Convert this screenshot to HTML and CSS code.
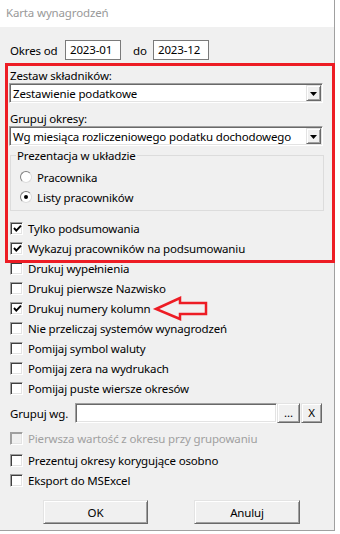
FILE: index.html
```html
<!DOCTYPE html>
<html>
  <head>
    <title>Karta wynagrodzeń</title>
    <link rel="stylesheet" href="styles.css">
  </head>

  <body>
    <div class="window">
      <div class="titlebar">Karta wynagrodzeń</div>

      <div class="dialog">
        <div class="period-row">
          <span class="period-label">Okres od</span>
          <div class="edit period">2023-01</div>
          <span class="period-to">do</span>
          <div class="edit period">2023-12</div>
        </div>

        <div class="field-label">Zestaw składników:</div>
        <div class="combo">
          <span class="combo-text">Zestawienie podatkowe</span>
          <span class="combo-button">
            <svg width="7" height="4" viewBox="0 0 7 4"><polygon points="0,0 7,0 3.5,4" fill="#000" /></svg>
          </span>
        </div>

        <div class="field-label">Grupuj okresy:</div>
        <div class="combo">
          <span class="combo-text">Wg miesiąca rozliczeniowego podatku dochodowego</span>
          <span class="combo-button">
            <svg width="7" height="4" viewBox="0 0 7 4"><polygon points="0,0 7,0 3.5,4" fill="#000" /></svg>
          </span>
        </div>

        <fieldset class="group">
          <legend>Prezentacja w układzie</legend>
          <div class="radio-row first"><span class="radio"></span>Pracownika</div>
          <div class="radio-row"><span class="radio checked"></span>Listy pracowników</div>
        </fieldset>

        <div class="options">
          <div class="check-row"><span class="check checked"><svg width="9" height="9" viewBox="0 0 9 9"><polyline points="1,4 3.3,6.6 8,1.6" /></svg></span>Tylko podsumowania</div>
          <div class="check-row"><span class="check checked"><svg width="9" height="9" viewBox="0 0 9 9"><polyline points="1,4 3.3,6.6 8,1.6" /></svg></span>Wykazuj pracowników na podsumowaniu</div>
          <div class="check-row"><span class="check"></span>Drukuj wypełnienia</div>
          <div class="check-row"><span class="check"></span>Drukuj pierwsze Nazwisko</div>
          <div class="check-row"><span class="check checked"><svg width="9" height="9" viewBox="0 0 9 9"><polyline points="1,4 3.3,6.6 8,1.6" /></svg></span>Drukuj numery kolumn</div>
          <div class="check-row"><span class="check"></span>Nie przeliczaj systemów wynagrodzeń</div>
          <div class="check-row"><span class="check"></span>Pomijaj symbol waluty</div>
          <div class="check-row"><span class="check"></span>Pomijaj zera na wydrukach</div>
          <div class="check-row"><span class="check"></span>Pomijaj puste wiersze okresów</div>
        </div>

        <div class="group-row">
          <span class="group-label">Grupuj wg.</span>
          <div class="edit group-edit"></div>
          <div class="small-button">...</div>
          <div class="small-button narrow">X</div>
        </div>

        <div class="options after-group">
          <div class="check-row disabled"><span class="check"></span>Pierwsza wartość z okresu przy grupowaniu</div>
          <div class="check-row tight"><span class="check"></span>Prezentuj okresy korygujące osobno</div>
          <div class="check-row"><span class="check"></span>Eksport do MSExcel</div>
        </div>

        <div class="buttons">
          <div class="button">OK</div>
          <div class="button wide">Anuluj</div>
        </div>
      </div>

      <!-- red annotation drawn over the dialog -->
      <div class="mark-box"></div>
      <svg class="mark-arrow" width="62" height="30" viewBox="0 0 62 30">
        <polygon points="6,16 30,5 30,10 56,10 56,21 30,21 30,26" />
      </svg>
    </div>
  </body>
</html>
```

FILE: styles.css
```css
body {
  margin: 0;
  background: #ffffff;
  font-family: "Noto Sans", sans-serif;
  font-size: 11.5px;
  letter-spacing: -0.15px;
  color: #000000;
}

.window {
  position: relative;
  width: 334px;
  height: 530px;
  background: #f0f0f0;
  border-right: 1px solid #a0a0a0;
  border-bottom: 1px solid #a0a0a0;
}

.titlebar {
  height: 27px;
  padding-left: 6px;
  background: #ffffff;
  color: #999999;
  line-height: 26px;
}

.dialog {
  padding: 13px 11px 0 10px;
}

.period-row {
  display: flex;
  align-items: center;
  height: 20px;
}

.period-label {
  width: 55px;
}

.period-to {
  width: 20px;
  margin-left: 12px;
}

.edit {
  box-sizing: border-box;
  height: 20px;
  background: #ffffff;
}

.period {
  width: 56px;
  padding-left: 4px;
  border: 1px solid #7a7a7a;
  line-height: 18px;
}

.field-label {
  height: 15px;
  margin-top: 8px;
  line-height: 15px;
}

.combo {
  box-sizing: border-box;
  display: flex;
  align-items: center;
  width: 314px;
  height: 20px;
  margin-left: -1px;
  padding: 1px;
  background: #ffffff;
  border: 1px solid;
  border-color: #a0a0a0 #ffffff #ffffff #a0a0a0;
  box-shadow: inset 1px 1px #696969, inset -1px -1px #e3e3e3;
}

.combo-text {
  flex: 1;
  padding-left: 2px;
  white-space: nowrap;
  overflow: hidden;
}

.combo-button,
.small-button,
.button {
  box-sizing: border-box;
  display: flex;
  align-items: center;
  justify-content: center;
  background: #f0f0f0;
  border: 1px solid;
  border-color: #e3e3e3 #696969 #696969 #e3e3e3;
  box-shadow: inset 1px 1px #ffffff, inset -1px -1px #a0a0a0;
}

.combo-button {
  width: 15px;
  height: 16px;
  padding-top: 1px;
}

.group {
  box-sizing: border-box;
  width: 314px;
  margin: 2px 0 0 0;
  padding: 0 0 3px 5px;
  border: 1px solid #dcdcdc;
}

.group legend {
  padding: 0 1px;
  line-height: 15px;
}

.radio-row,
.check-row {
  display: flex;
  align-items: center;
  height: 20px;
  white-space: nowrap;
}

.radio-row {
  padding-left: 4px;
}

.radio-row.first {
  margin-top: 4px;
}

.radio {
  box-sizing: border-box;
  display: flex;
  align-items: center;
  justify-content: center;
  width: 12px;
  height: 12px;
  margin-right: 5px;
  background: #ffffff;
  border: 1px solid;
  border-color: #808080 #dcdcdc #dcdcdc #808080;
  border-radius: 50%;
}

.radio.checked::after {
  content: "";
  width: 4px;
  height: 4px;
  background: #000000;
  border-radius: 50%;
}

.options {
  margin-top: 7px;
}

.check {
  box-sizing: border-box;
  display: flex;
  align-items: center;
  justify-content: center;
  width: 13px;
  height: 13px;
  margin-right: 5px;
  background: #ffffff;
  border: 1px solid;
  border-color: #a0a0a0 #ffffff #ffffff #a0a0a0;
  box-shadow: inset 1px 1px #404040, inset -1px -1px #e3e3e3;
}

.check svg {
  margin: 1px 0 0 1px;
}

.check polyline {
  fill: none;
  stroke: #000000;
  stroke-width: 1.9;
}

.check-row.disabled {
  color: #a0a0a0;
}

.check-row.disabled .check {
  background: #f0f0f0;
  box-shadow: inset 1px 1px #a0a0a0, inset -1px -1px #e3e3e3;
}

.group-row {
  display: flex;
  align-items: center;
  height: 20px;
  margin-top: 5px;
}

.group-label {
  width: 65px;
}

.group-edit {
  width: 202px;
  border: 1px solid;
  border-color: #a0a0a0 #ffffff #ffffff #a0a0a0;
  box-shadow: inset 1px 1px #696969, inset -1px -1px #e3e3e3;
}

.small-button {
  width: 23px;
  height: 20px;
  padding-bottom: 1px;
}

.small-button.narrow {
  width: 21px;
  margin-left: 1px;
}

.after-group {
  margin-top: 5px;
}

.check-row.tight {
  margin-top: 2px;
}

.buttons {
  display: flex;
  gap: 46px;
  margin-top: 10px;
  padding-left: 33px;
}

.button {
  width: 105px;
  height: 24px;
}

.button.wide {
  width: 106px;
}

.mark-box {
  position: absolute;
  left: 5px;
  top: 63px;
  width: 324px;
  height: 194px;
  border: 3px solid #ed1c24;
}

.mark-arrow {
  position: absolute;
  left: 150px;
  top: 293px;
}

.mark-arrow polygon {
  fill: none;
  stroke: #ed1c24;
  stroke-width: 2.5;
  stroke-linejoin: miter;
}
```
